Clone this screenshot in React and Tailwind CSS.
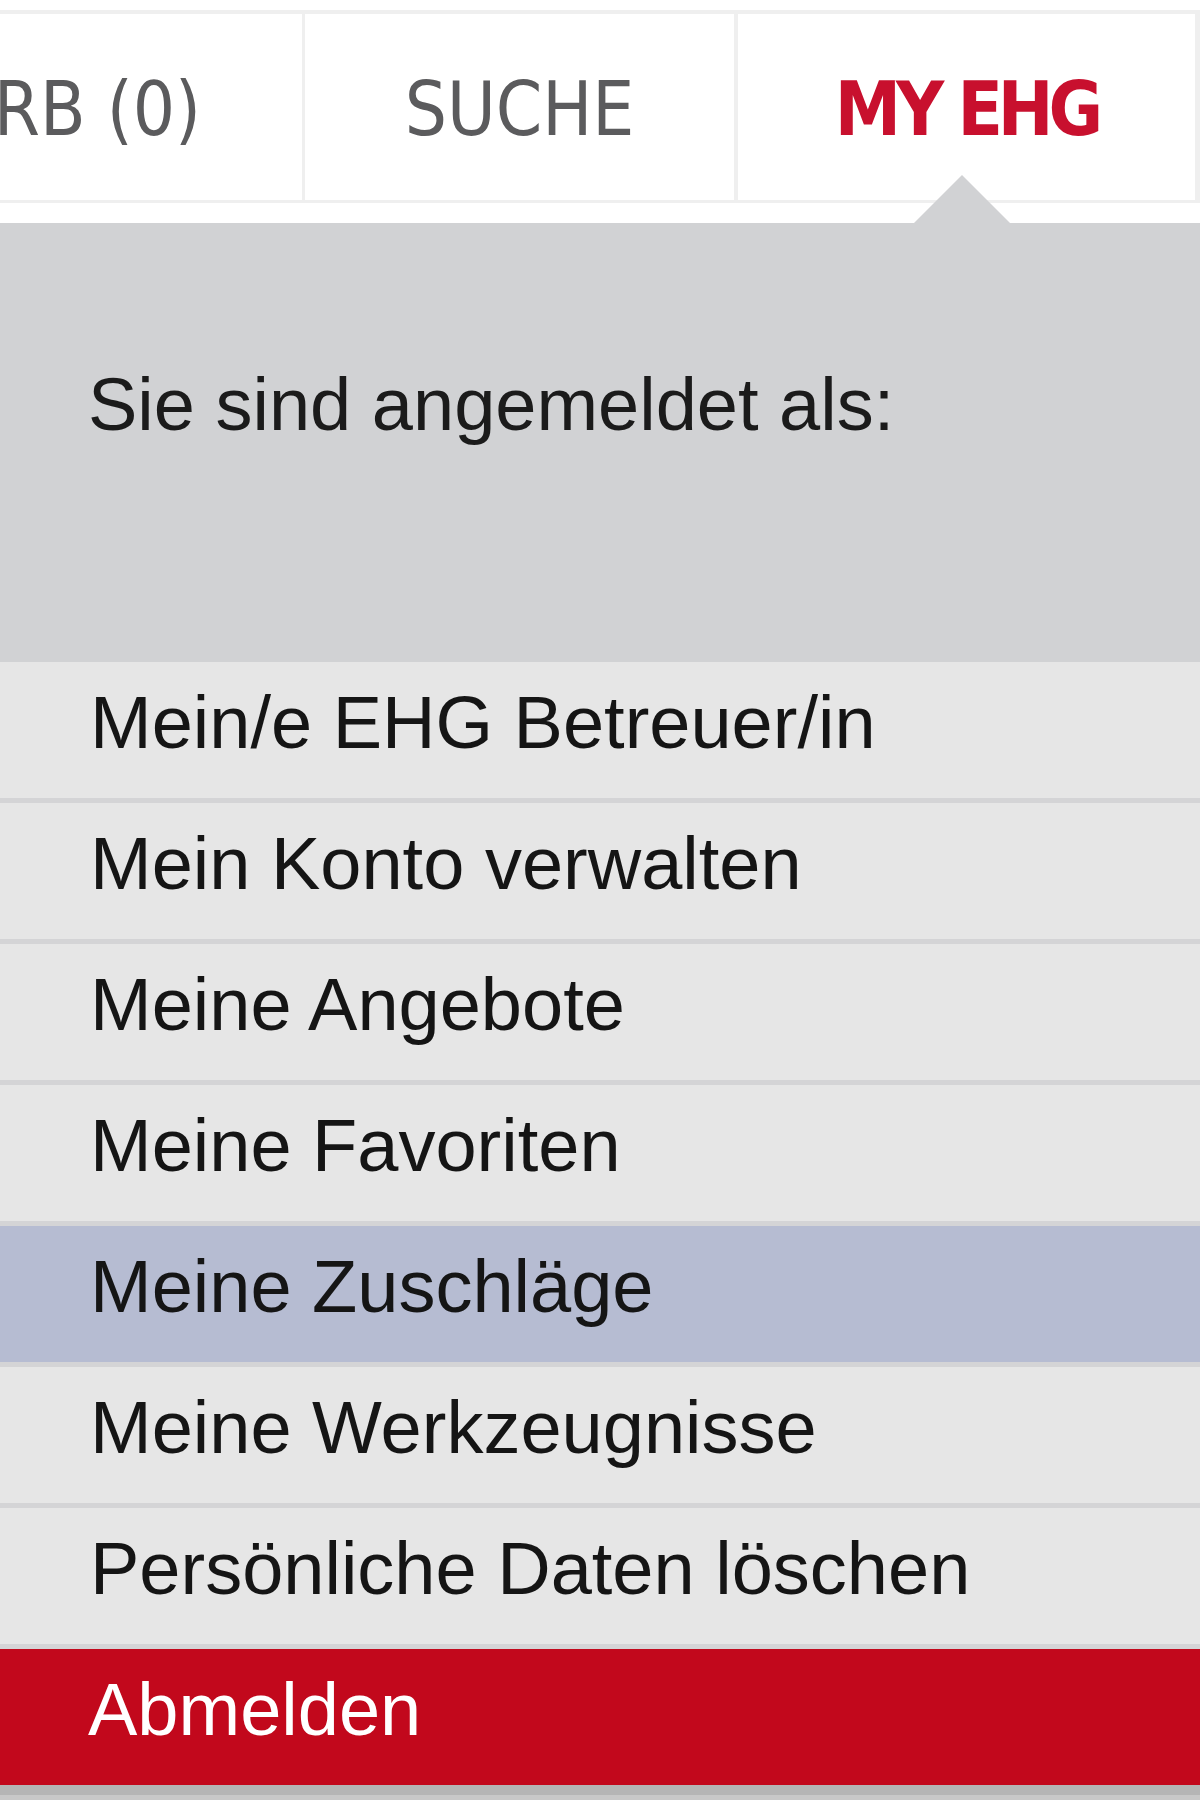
import React from "react";

const items = [
  { label: "Mein/e EHG Betreuer/in" },
  { label: "Mein Konto verwalten" },
  { label: "Meine Angebote" },
  { label: "Meine Favoriten" },
  { label: "Meine Zuschläge", active: true },
  { label: "Meine Werkzeugnisse" },
  { label: "Persönliche Daten löschen" },
];

const font = { fontFamily: '"Liberation Sans", Arial, sans-serif' };
const tabFont = { fontFamily: '"DejaVu Sans Condensed", "DejaVu Sans", sans-serif' };

export default function App() {
  return (
    <div className="w-[1200px] h-[1800px] overflow-hidden bg-white" style={font}>
      {/* top tab bar */}
      <div className="relative">
        <div className="h-[10px] bg-white" />
        <div className="h-[4px] bg-[#efefef]" />
        <div className="flex h-[186px] bg-[#efefef]" style={tabFont}>
          <div className="w-[302px] bg-white flex justify-end pr-[101px] pt-[58px] text-[74px] leading-none text-[#5b5b5d] whitespace-nowrap overflow-hidden">
            WARENKORB (0)
          </div>
          <div className="w-[429px] ml-[3px] bg-white flex justify-center pt-[58px] text-[74px] leading-none text-[#5b5b5d]">
            SUCHE
          </div>
          <div className="w-[457px] ml-[4px] bg-white flex justify-center pt-[58px] text-[74px] leading-none font-bold tracking-[-5px] text-[#c8102e]">
            MY EHG
          </div>
        </div>
        <div className="h-[3px] bg-[#efefef]" />
        <div className="h-[20px] bg-white" />
        {/* pointer */}
        <div className="absolute left-[914px] top-[175px] w-0 h-0 border-l-[48px] border-r-[48px] border-b-[48px] border-l-transparent border-r-transparent border-b-[#d1d2d4]" />
      </div>

      {/* logged in panel */}
      <div className="h-[439px] bg-[#d1d2d4] pl-[88px] pt-[145px] text-[74px] leading-none text-[#1b1b1b]">
        Sie sind angemeldet als:
      </div>

      {/* menu */}
      <ul>
        {items.map((item) => (
          <li
            key={item.label}
            className={
              "h-[141px] border-b-[5px] border-[#d4d4d6] pl-[90px] pt-[24px] text-[74px] leading-none text-[#151515] whitespace-nowrap " +
              (item.active ? "bg-[#b6bcd2]" : "bg-[#e6e6e6]")
            }
          >
            {item.label}
          </li>
        ))}
        <li className="h-[136px] bg-[#c2081c] pl-[88px] pt-[24px] text-[74px] leading-none text-white">
          Abmelden
        </li>
        <li className="h-[141px] border-t-[10px] border-[#b5b5b5] bg-[#c8c8c8] pl-[90px] pt-[3px] text-[74px] leading-none text-[#151515] whitespace-nowrap">
          Hilfe und Kontakt
        </li>
      </ul>
    </div>
  );
}
